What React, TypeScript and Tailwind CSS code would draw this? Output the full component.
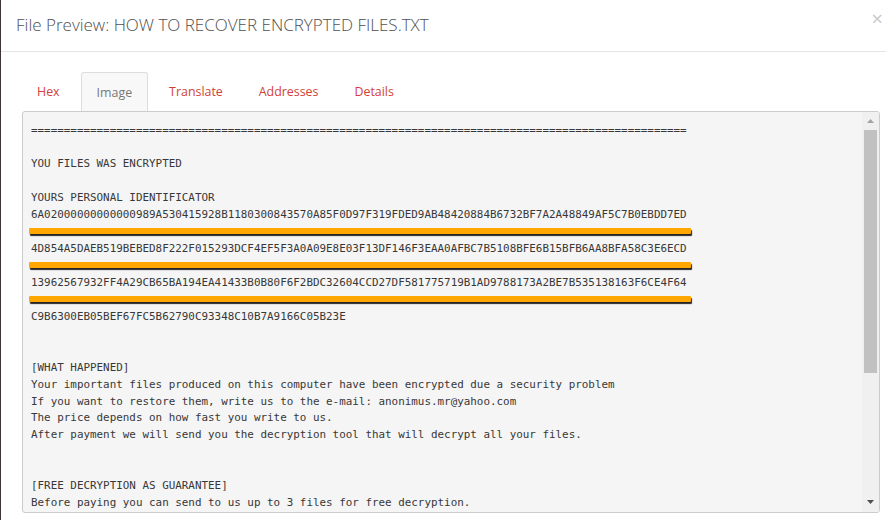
import React from "react";

const BAR = "__bar__";

const hexLines = [
  "6A02000000000000989A530415928B1180300843570A85F0D97F319FDED9AB48420884B6732BF7A2A48849AF5C7B0EBDD7ED",
  "4D854A5DAEB519BEBED8F222F015293DCF4EF5F3A0A09E8E03F13DF146F3EAA0AFBC7B5108BFE6B15BFB6AA8BFA58C3E6ECD",
  "13962567932FF4A29CB65BA194EA41433B0B80F6F2BDC32604CCD27DF581775719B1AD9788173A2BE7B535138163F6CE4F64",
  "C9B6300EB05BEF67FC5B62790C93348C10B7A9166C05B23E",
];

const lines: string[] = [
  "=".repeat(100),
  "",
  "YOU FILES WAS ENCRYPTED",
  "",
  "YOURS PERSONAL IDENTIFICATOR",
  hexLines[0],
  BAR,
  hexLines[1],
  BAR,
  hexLines[2],
  BAR,
  hexLines[3],
  "",
  "",
  "[WHAT HAPPENED]",
  "Your important files produced on this computer have been encrypted due a security problem",
  "If you want to restore them, write us to the e-mail: anonimus.mr@yahoo.com",
  "The price depends on how fast you write to us.",
  "After payment we will send you the decryption tool that will decrypt all your files.",
  "",
  "",
  "[FREE DECRYPTION AS GUARANTEE]",
  "Before paying you can send to us up to 3 files for free decryption.",
];

const tabs = ["Hex", "Image", "Translate", "Addresses", "Details"];

export default function App() {
  const active = "Image";

  return (
    <div className="w-[886px] h-[520px] bg-white border-l border-[#3f3434] overflow-hidden font-['Open_Sans',sans-serif]">
      {/* header */}
      <div className="h-[52px] border-b border-[#e5e5e5] flex items-center justify-between pl-[15px] pr-[3px]">
        <h4 className="text-[17px] font-light leading-[26px] text-[#505050] -mt-[2px]">
          File Preview: HOW TO RECOVER ENCRYPTED FILES.TXT
        </h4>
        <span className="text-[20px] leading-none text-[#c8c8c8] -mt-[14px]">×</span>
      </div>

      <div className="pt-[20px] pl-[21px] pr-[6px]">
        {/* tabs */}
        <div className="flex gap-[6px] h-[39px]">
          {tabs.map((t) =>
            t === active ? (
              <div
                key={t}
                className="h-[39px] px-[15px] pt-[2px] flex items-center text-[12.4px] text-[#777] bg-[#f8f8f8] border border-b-0 border-[#ddd] rounded-t-[3px]"
              >
                {t}
              </div>
            ) : (
              <div
                key={t}
                className="h-[39px] px-[15px] pt-[2px] flex items-center text-[12.4px] text-[#d23f38]"
              >
                {t}
              </div>
            )
          )}
        </div>

        {/* file content */}
        <div className="h-[402px] w-[858px] border border-[#cccccc] rounded-[3px] bg-[#f5f5f5] flex overflow-hidden">
          <div className="flex-1 overflow-hidden pt-[10.5px] pl-[8px] font-['DejaVu_Sans_Mono',monospace] text-[10.9px] leading-[16.95px] text-[#383838]">
            {lines.map((l, i) =>
              l === BAR ? (
                <div key={i} className="h-[16.95px] pt-[4px]">
                  <div className="h-[6px] w-[662px] -ml-[2px] bg-[#ffa600] rounded-[1px] shadow-[1px_2px_1px_rgba(0,0,0,0.85)]" />
                </div>
              ) : (
                <div key={i} className="h-[16.95px] whitespace-pre">
                  {l}
                </div>
              )
            )}
          </div>

          {/* scrollbar */}
          <div className="w-[17px] bg-[#f0f0f0] flex flex-col items-center">
            <div className="h-[18px] flex items-center justify-center">
              <svg width="7" height="4" viewBox="0 0 7 4">
                <path d="M0 4 L3.5 0 L7 4 Z" fill="#a3a3a3" />
              </svg>
            </div>
            <div className="w-[13px] h-[243px] bg-[#c1c1c1]" />
            <div className="flex-1" />
            <div className="h-[20px] flex items-center justify-center">
              <svg width="7" height="4" viewBox="0 0 7 4">
                <path d="M0 0 L7 0 L3.5 4 Z" fill="#505050" />
              </svg>
            </div>
          </div>
        </div>
      </div>
    </div>
  );
}
